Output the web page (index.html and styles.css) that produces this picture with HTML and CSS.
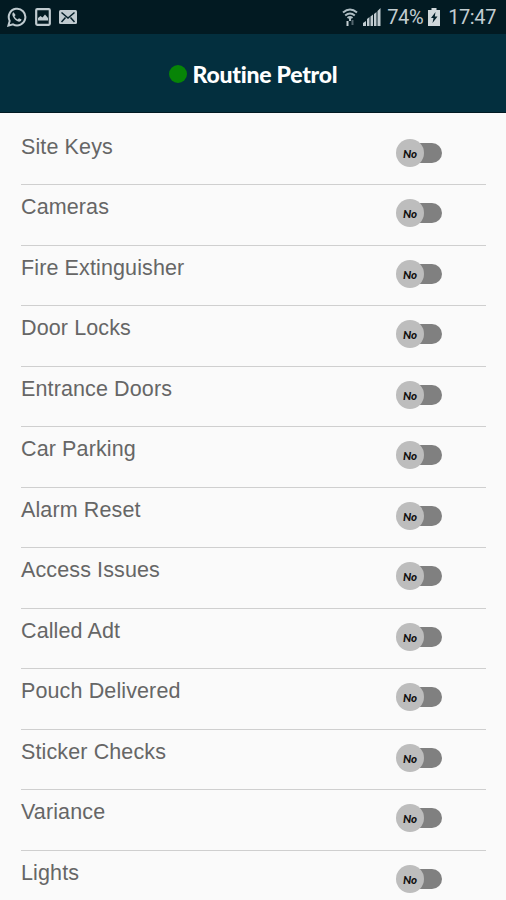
FILE: index.html
```html
<!DOCTYPE html>
<html lang="en">
<head>
<meta charset="utf-8">
<title>Routine Petrol</title>
<link rel="stylesheet" href="styles.css">
</head>
<body>
<div class="status">
  <div class="notifications">
    <svg width="20" height="20" viewBox="0 0 20 20" fill="none" stroke="#c0cbd0" stroke-width="2"><path d="M1.4 18.6l1.3-4.7A8.3 8.3 0 1 1 6 17.3z"/><path d="M6.5 5.2q-2 1.4-.6 4.3 2.2 4.4 6 5.2 2.5.2 2.7-2.1l-2.6-1.3-1.4 1.3q-2.2-.9-3.1-3L8.6 8z" fill="#c0cbd0" stroke="none"/></svg>
    <svg width="16" height="18" viewBox="0 0 16 18"><rect x="1.2" y="1.2" width="13.6" height="15.6" rx="1" fill="none" stroke="#c0cbd0" stroke-width="2.2"/><path d="M3 12.5V10l2.5-2 2 1.5L10 6.500l3 3.500v2.500z" fill="#c0cbd0"/></svg>
    <svg width="18" height="14" viewBox="0 0 18 14"><rect width="18" height="14" rx="1.500" fill="#c0cbd0"/><path d="M2.500 2.500L9 8l6.500-5.500M2.500 12l4-4.500M15.500 12l-4-4.500" fill="none" stroke="#05202a" stroke-width="1.500"/></svg>
  </div>
  <div class="system">
    <svg class="wifi" width="16" height="19" viewBox="0 0 16 19" fill="none" stroke="#aebdc3" stroke-width="2"><path d="M1 4.500Q8-1.500 15 4.500M3.200 7.500Q8 3.500 12.800 7.500M5.500 10Q8 8 10.500 10"/><path d="M8 10v3" /><path d="M5.500 13v5" stroke="#c6d0d4"/><path d="M10.500 12v5" stroke="#52656d"/></svg>
    <svg class="signal" width="18" height="18" viewBox="0 0 18 18" fill="#c0cbd0"><path d="M0 18v-3l3-2v5zM4 18v-7l2.500-2v9zM7.500 18V8.500l2.500-2V18zM11 18V6l2.500-2v14zM14.500 18V3l3-3v18z"/></svg>
    <span class="percent">74%</span>
    <svg class="battery" width="12" height="18" viewBox="0 0 12 18"><path d="M3.500 0h5v2H12v16H0V2h3.500z" fill="#d0d8db"/><path d="M7.500 4L3 10h2.500L4.500 15 9.500 8.500H6.800z" fill="#04202a"/></svg>
    <span class="clock">17:47</span>
  </div>
</div>
<header class="header"><span class="dot"></span><h1 class="title">Routine Petrol</h1></header>
<main class="list">
  <div class="row"><span class="label">Site Keys</span><span class="switch"><span class="knob">No</span></span></div>
  <div class="row"><span class="label">Cameras</span><span class="switch"><span class="knob">No</span></span></div>
  <div class="row"><span class="label">Fire Extinguisher</span><span class="switch"><span class="knob">No</span></span></div>
  <div class="row"><span class="label">Door Locks</span><span class="switch"><span class="knob">No</span></span></div>
  <div class="row"><span class="label">Entrance Doors</span><span class="switch"><span class="knob">No</span></span></div>
  <div class="row"><span class="label">Car Parking</span><span class="switch"><span class="knob">No</span></span></div>
  <div class="row"><span class="label">Alarm Reset</span><span class="switch"><span class="knob">No</span></span></div>
  <div class="row"><span class="label">Access Issues</span><span class="switch"><span class="knob">No</span></span></div>
  <div class="row"><span class="label">Called Adt</span><span class="switch"><span class="knob">No</span></span></div>
  <div class="row"><span class="label">Pouch Delivered</span><span class="switch"><span class="knob">No</span></span></div>
  <div class="row"><span class="label">Sticker Checks</span><span class="switch"><span class="knob">No</span></span></div>
  <div class="row"><span class="label">Variance</span><span class="switch"><span class="knob">No</span></span></div>
  <div class="row"><span class="label">Lights</span><span class="switch"><span class="knob">No</span></span></div>
</main>
</body>
</html>
```
FILE: styles.css
```css
* { box-sizing: border-box; }
body {
  margin: 0;
  height: 900px;
  overflow: hidden;
  background: #fafafa;
  font-family: "Liberation Sans", Arial, sans-serif;
}
.status {
  height: 34px;
  padding: 0 10px 0 7px;
  display: flex;
  justify-content: space-between;
  align-items: center;
  background: #021a22;
  color: #c3cdd1;
  font: 400 20px/34px Roboto, sans-serif;
}
.notifications, .system { display: flex; align-items: center; }
.notifications { gap: 8px; }
.percent { margin-left: 6px; letter-spacing: -0.4px; }
.signal { margin-left: 5px; }
.battery { margin-left: 5px; }
.clock { margin-left: 8px; letter-spacing: -0.4px; }
.header {
  height: 79px;
  padding-top: 24px;
  display: flex;
  justify-content: center;
  align-items: flex-start;
  gap: 6px;
  background: #032f3e;
  border-bottom: 1px solid #011a23;
}
.dot {
  width: 18px;
  height: 18px;
  margin-top: 7px;
  border-radius: 50%;
  background: #078407;
}
.title {
  margin: 0;
  color: #fff;
  font: 900 23px/32px Lato, sans-serif;
  letter-spacing: -0.25px;
}
.list { padding: 11.5px 20px 0 21px; }
.row {
  height: 60.5px;
  display: flex;
  justify-content: space-between;
  align-items: flex-start;
  border-bottom: 1px solid #cfcfcf;
}
.label {
  margin-top: 10px;
  color: #666;
  font-size: 21.5px;
  line-height: 24px;
  letter-spacing: 0.12px;
}
.switch {
  width: 46px;
  height: 28px;
  margin: 14px 44px 0 0;
  display: flex;
  align-items: center;
}
.switch::after {
  content: "";
  width: 32px;
  height: 20px;
  margin-left: -14px;
  border-radius: 10px;
  background: #808080;
}
.knob {
  z-index: 1;
  flex: none;
  width: 28px;
  height: 28px;
  border-radius: 50%;
  background: #bdbdbd;
  color: #111;
  text-align: center;
  font: italic 900 11.5px/30px Lato, sans-serif;
}
```
